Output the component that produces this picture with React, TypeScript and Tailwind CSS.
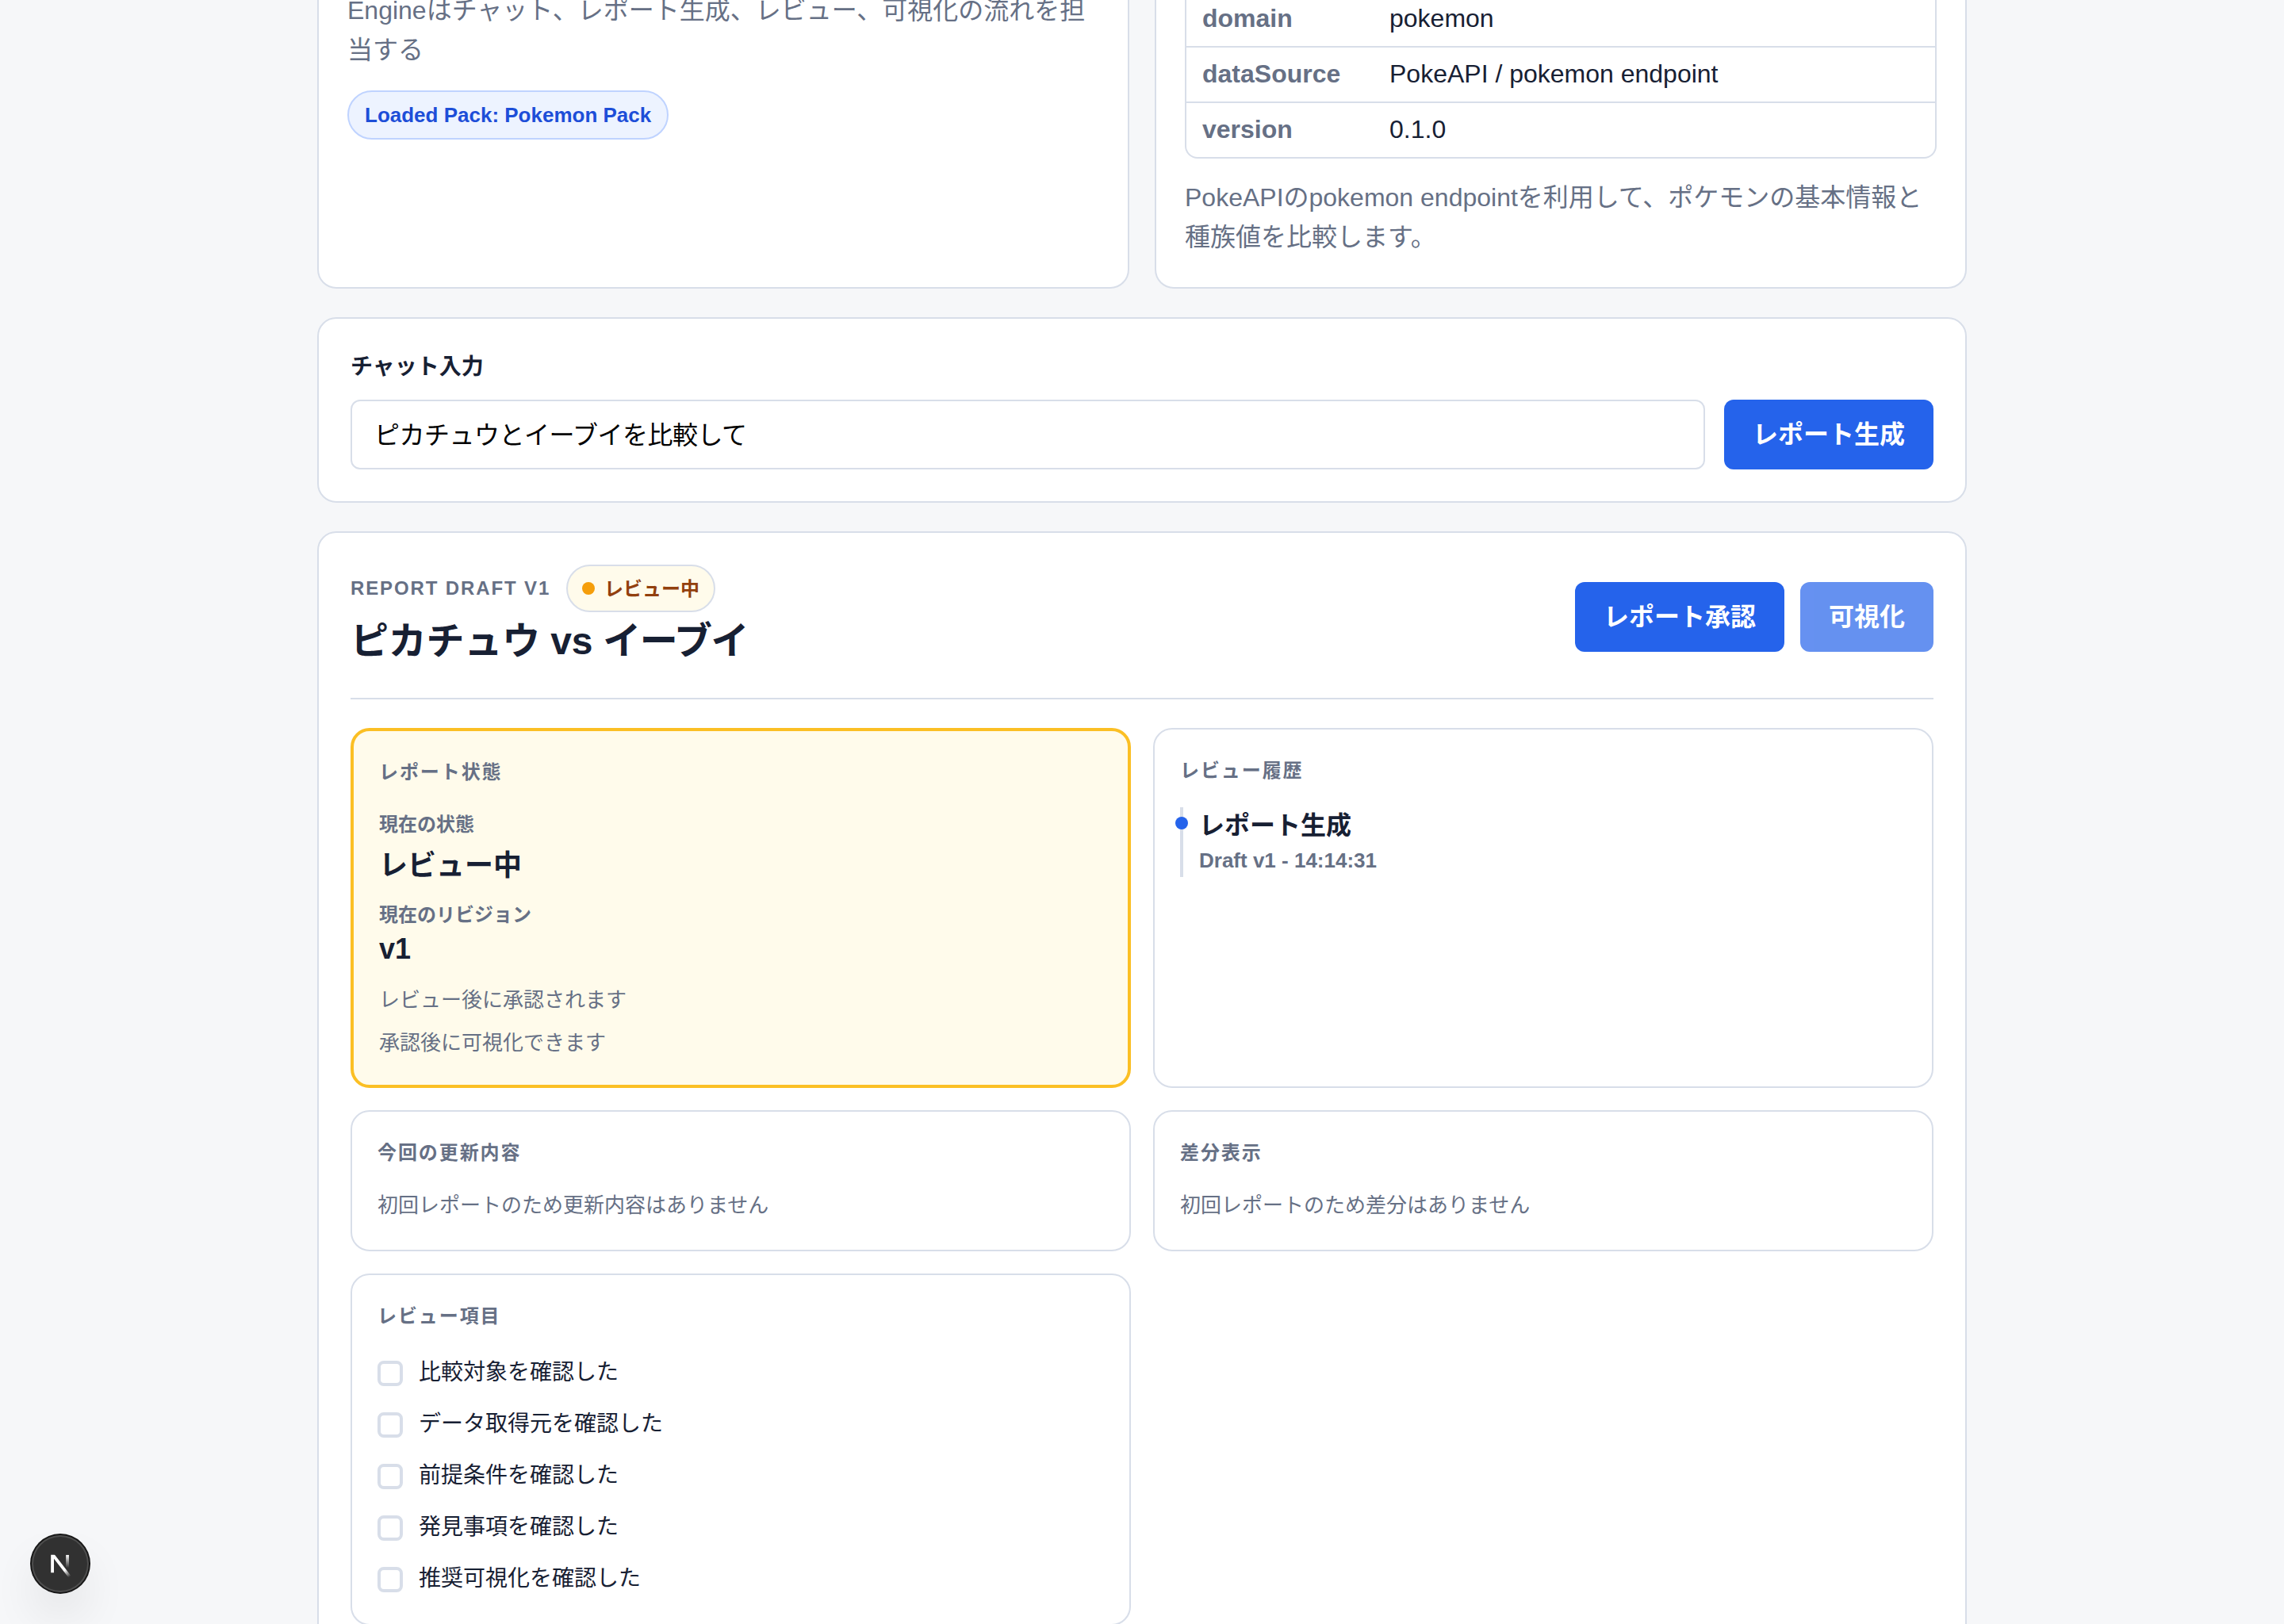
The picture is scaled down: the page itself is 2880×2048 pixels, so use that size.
// Report review screen: pack info, chat input, report draft with its review panels.
import type { ReactNode } from "react";

const PACK_ROWS: [string, string][] = [
  ["domain", "pokemon"],
  ["dataSource", "PokeAPI / pokemon endpoint"],
  ["version", "0.1.0"],
];

const REVIEW_ITEMS = [
  "比較対象を確認した",
  "データ取得元を確認した",
  "前提条件を確認した",
  "発見事項を確認した",
  "推奨可視化を確認した",
];

function PanelTitle({ children }: { children: ReactNode }) {
  return (
    <h3 className="text-[24px] leading-[40px] font-bold tracking-[0.08em] text-[#667085]">
      {children}
    </h3>
  );
}

function Panel({ title, children }: { title: string; children: ReactNode }) {
  return (
    <section className="rounded-3xl border-2 border-[#d8dee9] bg-white px-8 pt-8">
      <PanelTitle>{title}</PanelTitle>
      {children}
    </section>
  );
}

function PrimaryButton({ children, disabled }: { children: ReactNode; disabled?: boolean }) {
  return (
    <button
      type="button"
      disabled={disabled}
      className={`h-[88px] shrink-0 rounded-xl bg-[#2563eb] px-9 text-[32px] leading-[50px] font-bold text-white ${
        disabled ? "opacity-70" : ""
      }`}
    >
      {children}
    </button>
  );
}

function PackCards() {
  return (
    <div className="grid h-[364px] grid-cols-2 gap-8">
      <section className="rounded-b-3xl border-2 border-t-0 border-[#d8dee9] bg-white px-9">
        <p className="-mt-[11px] text-[32px] leading-[49.6px] text-[#667085]">
          Engineはチャット、レポート生成、レビュー、可視化の流れを担当する
        </p>
        <span className="mt-[26px] inline-flex h-[62px] items-center rounded-full border-2 border-[#bfd3ff] bg-[#edf3ff] px-5 text-[26px] font-bold text-[#1d4ed8]">
          Loaded Pack: Pokemon Pack
        </span>
      </section>

      <section className="rounded-b-3xl border-2 border-t-0 border-[#d8dee9] bg-white px-9">
        <dl className="-mt-3 rounded-b-2xl border-2 border-t-0 border-[#d8dee9]">
          {PACK_ROWS.map(([label, value]) => (
            <div
              key={label}
              className="flex h-[70px] items-center border-t-2 border-[#d8dee9] px-5 pb-[3px] text-[32px] leading-[50px]"
            >
              <dt className="w-[236px] font-bold text-[#667085]">{label}</dt>
              <dd className="text-[#172033]">{value}</dd>
            </div>
          ))}
        </dl>
        <p className="mt-[25px] text-[32px] leading-[49.6px] text-[#667085]">
          PokeAPIのpokemon endpointを利用して、ポケモンの基本情報と種族値を比較します。
        </p>
      </section>
    </div>
  );
}

function ChatForm() {
  return (
    <section className="mt-9 h-[234px] rounded-3xl border-2 border-[#d8dee9] bg-white px-10 pt-[39px]">
      <label htmlFor="chat" className="block text-[28px] leading-[44px] font-bold text-[#172033]">
        チャット入力
      </label>
      <div className="mt-[19px] flex gap-6">
        <input
          id="chat"
          defaultValue="ピカチュウとイーブイを比較して"
          className="h-[88px] min-w-0 flex-1 rounded-xl border-2 border-[#d8dee9] bg-white px-7 pb-1 text-[32px] tracking-[-0.5px] text-black"
        />
        <PrimaryButton>レポート生成</PrimaryButton>
      </div>
    </section>
  );
}

function ReportHeader() {
  return (
    <header className="flex h-[170px] items-start justify-between border-b-2 border-[#d8dee9]">
      <div>
        <div className="flex items-center gap-5">
          <p className="text-[24px] leading-[38px] font-bold tracking-[0.078em] text-[#667085]">
            REPORT DRAFT V1
          </p>
          <span className="flex h-[60px] items-center gap-3 rounded-full border-2 border-[#d8dee9] bg-[#fffbeb] px-[18px] text-[24px] font-bold text-[#92400e]">
            <span className="size-4 rounded-full bg-[#f59e0b]" />
            <span className="pt-0.5">レビュー中</span>
          </span>
        </div>
        <h2 className="mt-px text-[48px] leading-[72px] font-bold tracking-[-0.004em] text-[#172033]">
          ピカチュウ vs <span className="tracking-[-0.035em]">イーブイ</span>
        </h2>
      </div>
      <div className="mt-[22px] flex gap-5">
        <PrimaryButton>レポート承認</PrimaryButton>
        <PrimaryButton disabled>可視化</PrimaryButton>
      </div>
    </header>
  );
}

function StatusPanel() {
  return (
    <section className="rounded-3xl border-4 border-[#fbbf24] bg-[#fffbeb] px-8 pt-8">
      <PanelTitle>レポート状態</PanelTitle>
      <dl className="mt-[27px] font-bold">
        <dt className="text-[24px] leading-[38px] text-[#667085]">現在の状態</dt>
        <dd className="mt-[7px] text-[36px] leading-[52px] text-[#172033]">レビュー中</dd>
        <dt className="mt-[17px] text-[24px] leading-[38px] text-[#667085]">現在のリビジョン</dt>
        <dd className="text-[36px] leading-[48px] text-[#172033]">v1</dd>
      </dl>
      <p className="mt-5 text-[26px] leading-[40px] text-[#667085]">レビュー後に承認されます</p>
      <p className="mt-3.5 text-[26px] leading-[40px] text-[#667085]">承認後に可視化できます</p>
    </section>
  );
}

function HistoryPanel() {
  return (
    <Panel title="レビュー履歴">
      <ol className="mt-[26px]">
        <li className="relative h-[88px] border-l-4 border-[#d8dee9] pl-5 font-bold">
          <span className="absolute top-3 -left-2.5 size-4 rounded-full bg-[#2563eb]" />
          <p className="text-[32px] leading-[46px] text-[#172033]">レポート生成</p>
          <p className="text-[26px] leading-[42px] text-[#667085]">Draft v1 - 14:14:31</p>
        </li>
      </ol>
    </Panel>
  );
}

function ReviewPanel() {
  return (
    <Panel title="レビュー項目">
      <ul className="mt-[29px] flex flex-col gap-[21px]">
        {REVIEW_ITEMS.map((item) => (
          <li key={item} className="h-11">
            <label className="flex gap-5 text-[28px] leading-[44px] text-[#172033]">
              <input
                type="checkbox"
                className="mt-[7px] size-8 appearance-none rounded-lg border-4 border-[#d8dee9] bg-white"
              />
              {item}
            </label>
          </li>
        ))}
      </ul>
    </Panel>
  );
}

function DevBadge() {
  return (
    <div className="absolute bottom-10 left-10 size-[72px] rounded-full bg-[#313131] shadow-[0_0_0_2px_#171717,inset_0_0_0_2px_rgba(255,255,255,0.14),0_32px_64px_-16px_rgba(0,0,0,0.24)]">
      <svg className="-mt-1 -ml-1 size-20 max-w-none" viewBox="0 0 40 40" fill="none">
        <g transform="translate(12.7 13)" strokeWidth="1.9" clipPath="url(#n-box)">
          <path d="M13.3 15.2 L2.34 1 V12.6" stroke="url(#n-diagonal)" />
          <path d="M11.825 1.4 V13.1" stroke="url(#n-stem)" />
        </g>
        <defs>
          <clipPath id="n-box">
            <rect x="1.2" y="1.4" width="14" height="14" />
          </clipPath>
          <linearGradient
            id="n-diagonal"
            gradientUnits="userSpaceOnUse"
            x1="9.95555"
            y1="11.1226"
            x2="15.4778"
            y2="17.9671"
          >
            <stop stopColor="white" />
            <stop offset="0.604072" stopColor="white" stopOpacity="0" />
          </linearGradient>
          <linearGradient
            id="n-stem"
            gradientUnits="userSpaceOnUse"
            x1="11.8222"
            y1="1.40039"
            x2="11.791"
            y2="9.62542"
          >
            <stop stopColor="white" />
            <stop offset="1" stopColor="white" stopOpacity="0" />
          </linearGradient>
        </defs>
      </svg>
    </div>
  );
}

export default function App() {
  return (
    <div
      lang="ja"
      className="relative h-[2048px] overflow-hidden bg-[#f6f7f9] font-['Liberation_Sans','Noto_Sans_CJK_JP',sans-serif]"
    >
      <main className="mx-auto w-[2080px]">
        <PackCards />
        <ChatForm />
        <section className="mt-9 h-[1500px] rounded-t-3xl border-2 border-[#d8dee9] bg-white px-10 pt-10">
          <ReportHeader />
          <div className="mt-9 grid grid-cols-2 grid-rows-[454px_178px_444px] gap-7">
            <StatusPanel />
            <HistoryPanel />
            <Panel title="今回の更新内容">
              <p className="mt-[26px] text-[26px] leading-[40px] text-[#667085]">
                初回レポートのため更新内容はありません
              </p>
            </Panel>
            <Panel title="差分表示">
              <p className="mt-[26px] text-[26px] leading-[40px] text-[#667085]">
                初回レポートのため差分はありません
              </p>
            </Panel>
            <ReviewPanel />
          </div>
        </section>
      </main>
      <DevBadge />
    </div>
  );
}
